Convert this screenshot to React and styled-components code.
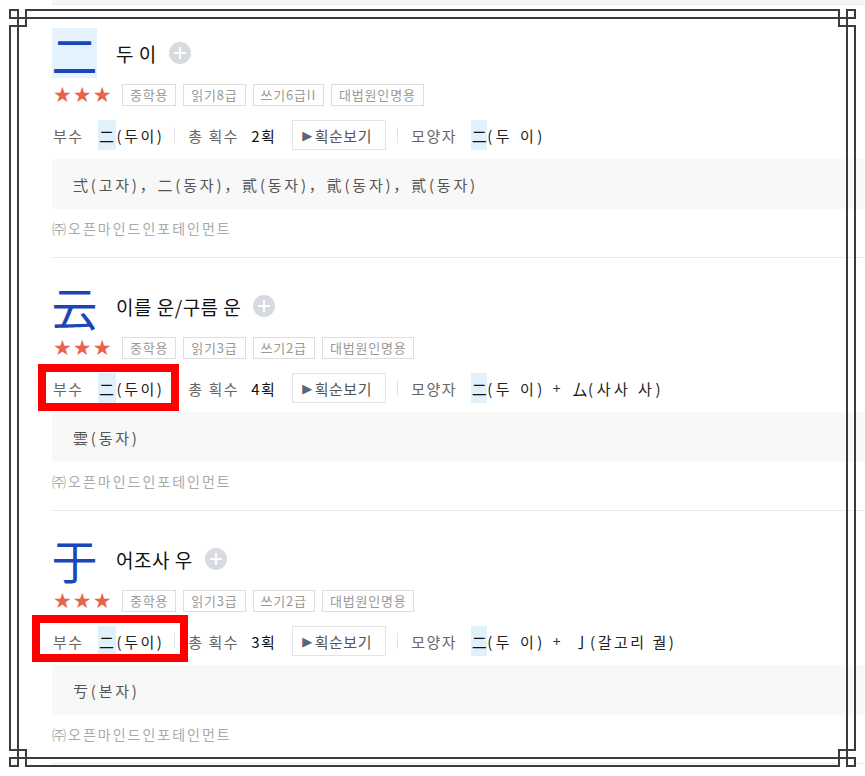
import styled, { createGlobalStyle } from "styled-components";

const GlobalStyle = createGlobalStyle`
  html, body {
    margin: 0;
    padding: 0;
    background: #fff;
    overflow: hidden;
  }
  body {
    font-family: "Noto Sans CJK KR", "Noto Sans", sans-serif;
    color: #222;
  }
`;

const entries = [
  {
    hanja: "二",
    highlight: true,
    title: "두 이",
    grades: ["중학용", "읽기8급", "쓰기6급II", "대법원인명용"],
    strokes: "2획",
    shapes: [{ ch: "二", hl: true, reading: "(두 이)" }],
    variants: "弍(고자)，二(동자)，貳(동자)，貮(동자)，貳(동자)",
    mark: null,
  },
  {
    hanja: "云",
    highlight: false,
    title: "이를 운/구름 운",
    grades: ["중학용", "읽기3급", "쓰기2급", "대법원인명용"],
    strokes: "4획",
    shapes: [
      { ch: "二", hl: true, reading: "(두 이)" },
      { ch: "厶", hl: false, reading: "(사사 사)" },
    ],
    variants: "雲(동자)",
    mark: { left: -14, top: -9, width: 141, height: 47 },
  },
  {
    hanja: "于",
    highlight: false,
    title: "어조사 우",
    grades: ["중학용", "읽기3급", "쓰기2급", "대법원인명용"],
    strokes: "3획",
    shapes: [
      { ch: "二", hl: true, reading: "(두 이)" },
      { ch: "亅", hl: false, reading: "(갈고리 궐)", gap: 2, tight: true },
    ],
    variants: "亐(본자)",
    mark: { left: -20, top: -11, width: 156, height: 47 },
  },
];

const App = () => {
  return (
    <>
      <GlobalStyle />
      <Page>
        <TopStrip />
        {entries.map((e) => (
          <Entry key={e.hanja}>
            <Header>
              <HanjaBox $hl={e.highlight}>{e.hanja}</HanjaBox>
              <Title>{e.title}</Title>
              <PlusBtn />
            </Header>
            <TagRow>
              <Stars>★★★</Stars>
              <Tags>
                {e.grades.map((g) => (
                  <Tag key={g}>{g}</Tag>
                ))}
              </Tags>
            </TagRow>
            <InfoRow>
              <Label>부수</Label>
              <HlChar $ml={14}>二</HlChar>
              <Reading>(두이)</Reading>
              <Sep />
              <Label>총 획수</Label>
              <Strokes>{e.strokes}</Strokes>
              <StrokeBtn>
                <Tri>▶</Tri>획순보기
              </StrokeBtn>
              <Sep $ml={11} />
              <Label>모양자</Label>
              {e.shapes.map((s, i) => (
                <Shape key={i}>
                  {i > 0 && <Plus>+</Plus>}
                  <HlChar $ml={i > 0 ? s.gap || 0 : 14} $hl={s.hl} $w={16}>
                    {s.ch}
                  </HlChar>
                  <ShapeReading $tight={s.tight}>{s.reading}</ShapeReading>
                </Shape>
              ))}
              {e.mark && (
                <RedMark
                  style={{
                    left: e.mark.left,
                    top: e.mark.top,
                    width: e.mark.width,
                    height: e.mark.height,
                  }}
                />
              )}
            </InfoRow>
            <VariantBox>{e.variants}</VariantBox>
            <Source>㈜오픈마인드인포테인먼트</Source>
          </Entry>
        ))}
      </Page>
      <Frame>
        <Corner $v="top" $h="left">
          <Knot $v="top" $h="left" />
        </Corner>
        <Corner $v="top" $h="right">
          <Knot $v="top" $h="right" />
        </Corner>
        <Corner $v="bottom" $h="left">
          <Knot $v="bottom" $h="left" />
        </Corner>
        <Corner $v="bottom" $h="right">
          <Knot $v="bottom" $h="right" />
        </Corner>
      </Frame>
    </>
  );
};

const Page = styled.div`
  padding-left: 52px;
  width: 900px;
`;

const TopStrip = styled.div`
  height: 4px;
  background: #f5f5f5;
  border-bottom: 1px solid #ececec;
`;

const Entry = styled.section`
  display: flex;
  flex-direction: column;
  padding: 23px 0 19px;
  border-bottom: 1px solid #ebebeb;
`;

const Header = styled.div`
  display: flex;
  align-items: center;
  height: 50px;
`;

const HanjaBox = styled.div`
  width: 45px;
  height: 50px;
  display: flex;
  align-items: center;
  justify-content: center;
  background: ${({ $hl }) => ($hl ? "#e3f2fd" : "transparent")};
  color: #1b47b6;
  font-size: 46px;
  line-height: 50px;
`;

const Title = styled.span`
  margin-left: 19px;
  font-size: 19px;
  color: #111;
  letter-spacing: 0.5px;
`;

const PlusBtn = styled.span`
  position: relative;
  margin-left: 12px;
  width: 22px;
  height: 22px;
  border-radius: 50%;
  background: #d7dadf;

  &::before,
  &::after {
    content: "";
    position: absolute;
    left: 50%;
    top: 50%;
    background: #fff;
    transform: translate(-50%, -50%);
  }
  &::before {
    width: 12px;
    height: 2px;
  }
  &::after {
    width: 2px;
    height: 12px;
  }
`;

const TagRow = styled.div`
  display: flex;
  align-items: center;
  height: 22px;
  margin-top: 6px;
`;

const Stars = styled.span`
  margin-left: 1px;
  width: 69px;
  color: #e8624d;
  font-family: "DejaVu Sans", sans-serif;
  font-size: 21px;
  letter-spacing: 1px;
  line-height: 22px;
`;

const Tags = styled.div`
  display: flex;
  gap: 7px;
`;

const Tag = styled.span`
  box-sizing: border-box;
  height: 22px;
  padding: 0 7px;
  border: 1px solid #dedede;
  color: #999;
  font-size: 13px;
  line-height: 20px;
  letter-spacing: 0.8px;
`;

const InfoRow = styled.div`
  position: relative;
  display: flex;
  align-items: center;
  height: 30px;
  margin-top: 14px;
  font-size: 15px;
  letter-spacing: 1.5px;
`;

const Label = styled.span`
  margin-left: 1px;
  color: #666;
  white-space: pre;
`;

const HlChar = styled.span`
  margin-left: ${({ $ml }) => $ml || 0}px;
  width: ${({ $w }) => $w || 18}px;
  height: 30px;
  display: flex;
  align-items: center;
  justify-content: center;
  background: ${({ $hl = true }) => ($hl ? "#e1f1fc" : "transparent")};
  color: #111;
  letter-spacing: 0;
`;

const Reading = styled.span`
  margin-left: 1px;
  color: #222;
  letter-spacing: 2.5px;
`;

const Sep = styled.span`
  width: 1px;
  height: 16px;
  margin: 0 12px 0 ${({ $ml }) => $ml || 10}px;
  background: #e2e2e2;
`;

const Strokes = styled.span`
  margin-left: 12px;
  color: #111;
`;

const StrokeBtn = styled.span`
  box-sizing: border-box;
  display: flex;
  align-items: center;
  height: 30px;
  width: 94px;
  margin-left: 16px;
  padding-left: 9px;
  border: 1px solid #e3e3e3;
  color: #555;
  font-size: 15px;
  letter-spacing: 0.5px;
`;

const Tri = styled.span`
  color: #5b6577;
  font-family: "DejaVu Sans", sans-serif;
  font-size: 13px;
  margin-right: 2px;
`;

const Shape = styled.span`
  display: flex;
  align-items: center;
`;

const ShapeReading = styled.span`
  color: #222;
  letter-spacing: ${({ $tight }) => ($tight ? 2.5 : 3.5)}px;
`;

const Plus = styled.span`
  margin: 0 10px 0 7px;
  color: #333;
  font-size: 14px;
`;

const RedMark = styled.span`
  position: absolute;
  box-sizing: border-box;
  border: 8px solid #ff0000;
  pointer-events: none;
`;

const VariantBox = styled.div`
  display: flex;
  align-items: center;
  height: 50px;
  margin-top: 9px;
  padding-left: 21px;
  background: #f8f8f8;
  color: #555;
  font-size: 15px;
  letter-spacing: 2.8px;
`;

const Source = styled.div`
  margin-top: 9px;
  line-height: 20px;
  color: #aaa;
  font-size: 14px;
  letter-spacing: 2px;
`;

const lineColor = "#3b3b3b";

const Frame = styled.div`
  position: fixed;
  top: 9px;
  left: 9px;
  right: 9px;
  bottom: 9px;
  border: 2px solid ${lineColor};
  pointer-events: none;

  &::after {
    content: "";
    position: absolute;
    inset: 6px;
    border: 2px solid ${lineColor};
    z-index: 2;
  }
`;

const Corner = styled.span`
  position: absolute;
  ${({ $v }) => $v}: -2px;
  ${({ $h }) => $h}: -2px;
  box-sizing: border-box;
  width: 18px;
  height: 18px;
  background: #fff;
  border-${({ $v }) => ($v === "top" ? "bottom" : "top")}: 2px solid ${lineColor};
  border-${({ $h }) => ($h === "left" ? "right" : "left")}: 2px solid ${lineColor};
  z-index: 1;
`;

const Knot = styled.span`
  position: absolute;
  ${({ $v }) => $v}: 0;
  ${({ $h }) => $h}: 0;
  box-sizing: border-box;
  width: 10px;
  height: 10px;
  border: 2px solid ${lineColor};
`;

export default App;
